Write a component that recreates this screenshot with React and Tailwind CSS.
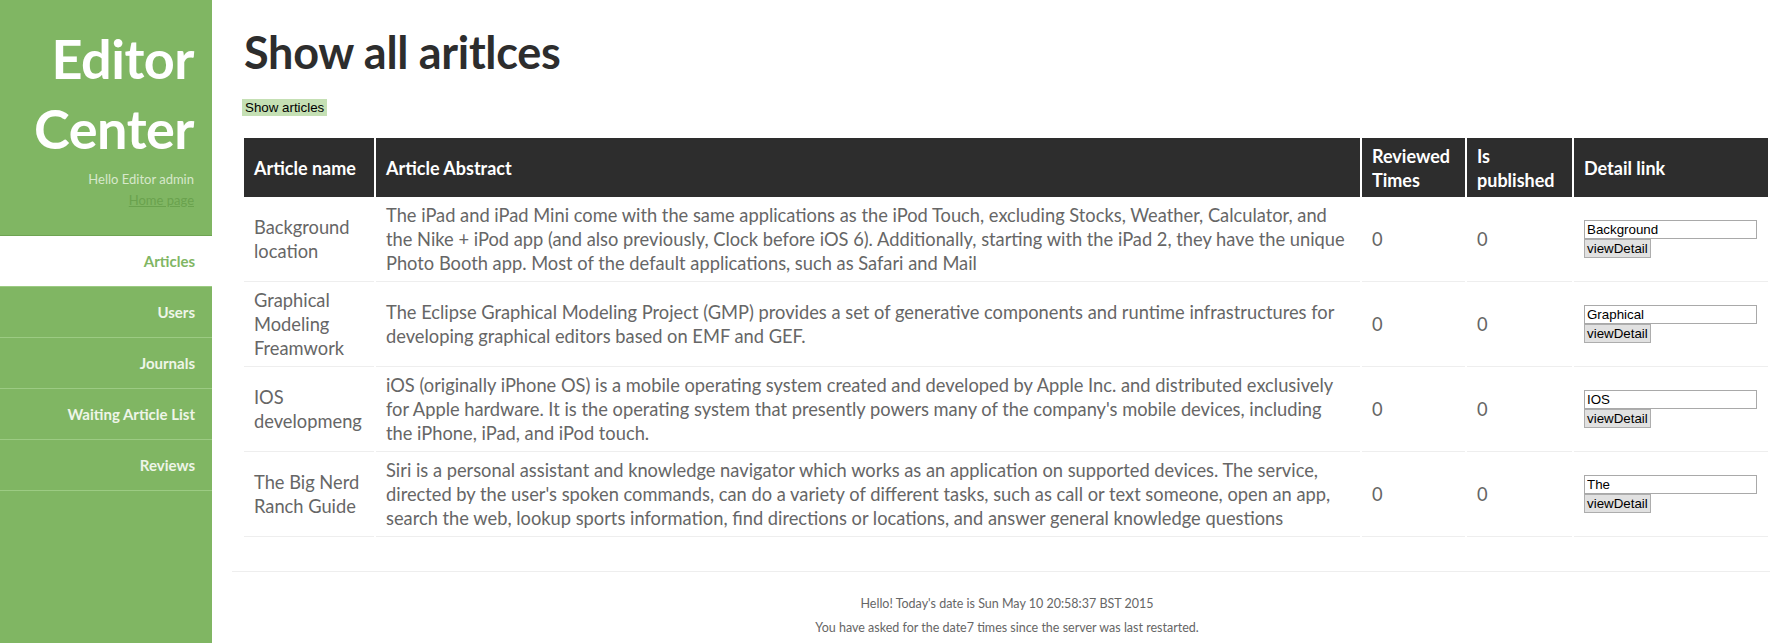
const NAV = ["Articles", "Users", "Journals", "Waiting Article List", "Reviews"];

const ARTICLES = [
    {
        name: "Background location",
        abstract:
            "The iPad and iPad Mini come with the same applications as the iPod Touch, excluding Stocks, Weather, Calculator, and the Nike + iPod app (and also previously, Clock before iOS 6). Additionally, starting with the iPad 2, they have the unique Photo Booth app. Most of the default applications, such as Safari and Mail",
        key: "Background",
    },
    {
        name: "Graphical Modeling Freamwork",
        abstract:
            "The Eclipse Graphical Modeling Project (GMP) provides a set of generative components and runtime infrastructures for developing graphical editors based on EMF and GEF.",
        key: "Graphical",
    },
    {
        name: "IOS developmeng",
        abstract:
            "iOS (originally iPhone OS) is a mobile operating system created and developed by Apple Inc. and distributed exclusively for Apple hardware. It is the operating system that presently powers many of the company's mobile devices, including the iPhone, iPad, and iPod touch.",
        key: "IOS",
    },
    {
        name: "The Big Nerd Ranch Guide",
        abstract:
            "Siri is a personal assistant and knowledge navigator which works as an application on supported devices. The service, directed by the user's spoken commands, can do a variety of different tasks, such as call or text someone, open an app, search the web, lookup sports information, find directions or locations, and answer general knowledge questions",
        key: "The",
    },
];

const sans = "font-['Lato','Open_Sans',sans-serif]";

function Sidebar() {
    return (
        <aside className={`w-[212px] shrink-0 bg-[#80b663] min-h-[643px] ${sans}`}>
            {/* brand */}
            <div className="h-[236px] border-b border-[#6ea352] pr-[18px] pt-[24px] text-right">
                <h1 className="text-[54px] font-bold leading-[70px] text-white tracking-[-0.5px]">
                    Editor
                    <br />
                    Center
                </h1>
                <p className="mt-[7px] text-[13px] leading-[16px] text-[#d7e8cb]">Hello Editor admin</p>
                <a className="text-[13px] leading-[16px] text-[#6aa24e] underline">Home page</a>
            </div>
            <nav>
                {NAV.map((item, i) => (
                    <div
                        key={item}
                        className={
                            "h-[51px] border-b border-[#9ccb83] pr-[17px] flex items-center justify-end text-[15px] font-bold " +
                            (i === 0 ? "bg-white text-[#80b663]" : "text-[#eef5e8]")
                        }
                    >
                        {item}
                    </div>
                ))}
            </nav>
        </aside>
    );
}

function DetailCell({ value }) {
    return (
        <div className="flex flex-col items-start font-['Liberation_Sans',Arial,sans-serif] text-[13.33px] text-black">
            <input
                readOnly
                value={value}
                className="w-[173px] h-[19px] border border-[#a9a9a9] px-[2px] leading-[17px] outline-none"
            />
            <button className="h-[19px] px-[2px] leading-[17px] bg-[#e1e1e1] border border-[#adadad]">
                viewDetail
            </button>
        </div>
    );
}

export default function App() {
    return (
        <div className="flex w-[1770px] min-h-[643px] bg-white">
            <Sidebar />
            <main className={`flex-1 pl-[20px] ${sans}`}>
                <div className="pl-[10px]">
                    <h1 className="pl-[2px] pt-[25px] text-[45px] font-bold leading-[54px] text-[#2d2d2d] tracking-[-0.3px]">
                        Show all aritlces
                    </h1>
                    <div className="mt-[20px] flex">
                        <span className="bg-[#c5e0b4] px-[3px] text-[13.33px] leading-[17px] font-medium text-black font-['Liberation_Sans',Arial,sans-serif]">
                            Show articles
                        </span>
                    </div>
                    <table className="mt-[22px] w-[1528px] table-fixed border-separate border-spacing-x-[2px] border-spacing-y-0">
                        <thead>
                            <tr className="text-white text-[18px] leading-[24px] font-bold text-left">
                                <th className="w-[130px] h-[59px] px-[10px] bg-[#2d2d2d]">Article name</th>
                                <th className="w-[984px] px-[10px] bg-[#2d2d2d]">Article Abstract</th>
                                <th className="w-[103px] px-[10px] bg-[#2d2d2d]">Reviewed Times</th>
                                <th className="w-[105px] px-[10px] bg-[#2d2d2d]">Is published</th>
                                <th className="w-[194px] px-[10px] bg-[#2d2d2d]">Detail link</th>
                            </tr>
                        </thead>
                        <tbody className="text-[18.3px] leading-[24px] text-[#666]">
                            {ARTICLES.map((a) => (
                                <tr key={a.key}>
                                    <td className="px-[10px] py-[6px] h-[85px] border-b border-[#eee] align-middle">{a.name}</td>
                                    <td className="px-[10px] py-[6px] border-b border-[#eee] align-middle">{a.abstract}</td>
                                    <td className="px-[10px] py-[6px] border-b border-[#eee] align-middle">0</td>
                                    <td className="px-[10px] py-[6px] border-b border-[#eee] align-middle">0</td>
                                    <td className="px-[10px] py-[6px] border-b border-[#eee] align-middle">
                                        <DetailCell value={a.key} />
                                    </td>
                                </tr>
                            ))}
                        </tbody>
                    </table>
                </div>
                <footer className="mt-[34px] border-t border-[#eee] pt-[20px] pb-[8px] text-center text-[12.5px] leading-[24px] text-[#666]">
                    <div className="pl-[12px]">
                        <p>Hello! Today's date is Sun May 10 20:58:37 BST 2015</p>
                        <p>You have asked for the date7 times since the server was last restarted.</p>
                    </div>
                </footer>
            </main>
        </div>
    );
}
